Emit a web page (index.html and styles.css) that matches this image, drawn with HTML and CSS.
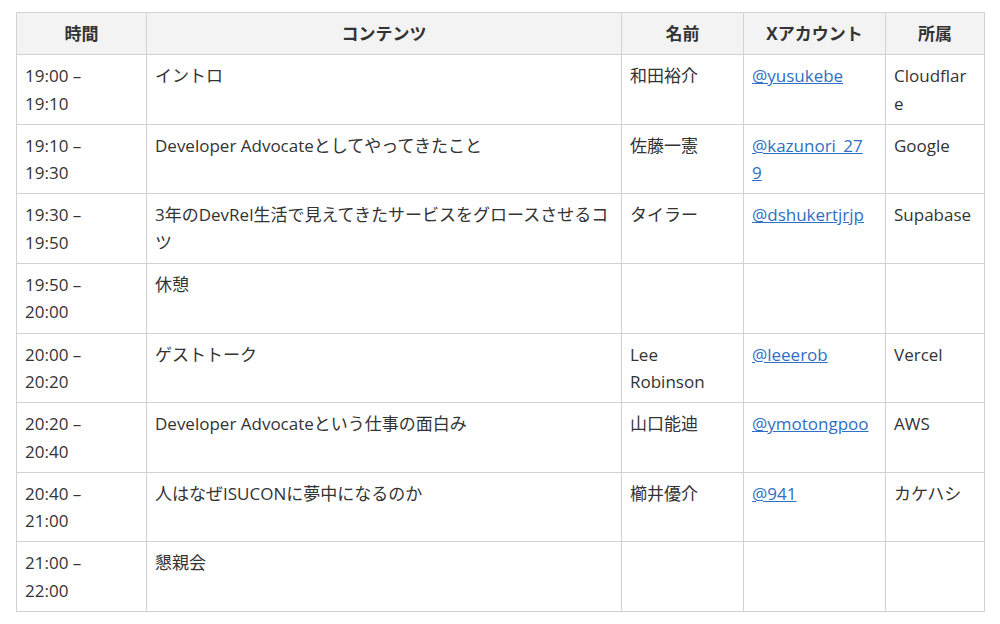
FILE: index.html
```html
<!DOCTYPE html>
<html lang="ja">
<head>
<meta charset="utf-8">
<link rel="stylesheet" href="styles.css">
</head>
<body>
<table class="schedule">
  <colgroup>
    <col class="c-time"><col class="c-content"><col class="c-name"><col class="c-x"><col class="c-org">
  </colgroup>
  <thead>
    <tr><th>時間</th><th>コンテンツ</th><th>名前</th><th>Xアカウント</th><th>所属</th></tr>
  </thead>
  <tbody>
    <tr><td class="time">19:00 – 19:10</td><td>イントロ</td><td>和田裕介</td><td class="x"><a href="#">@yusukebe</a></td><td class="org">Cloudflare</td></tr>
    <tr><td class="time">19:10 – 19:30</td><td>Developer Advocateとしてやってきたこと</td><td>佐藤一憲</td><td class="x"><a href="#">@kazunori_279</a></td><td class="org">Google</td></tr>
    <tr><td class="time">19:30 – 19:50</td><td>3年のDevRel生活で見えてきたサービスをグロースさせるコツ</td><td>タイラー</td><td class="x"><a href="#">@dshukertjrjp</a></td><td class="org">Supabase</td></tr>
    <tr><td class="time">19:50 – 20:00</td><td>休憩</td><td></td><td class="x"></td><td class="org"></td></tr>
    <tr><td class="time">20:00 – 20:20</td><td>ゲストトーク</td><td>Lee Robinson</td><td class="x"><a href="#">@leeerob</a></td><td class="org">Vercel</td></tr>
    <tr><td class="time">20:20 – 20:40</td><td>Developer Advocateという仕事の面白み</td><td>山口能迪</td><td class="x"><a href="#">@ymotongpoo</a></td><td class="org">AWS</td></tr>
    <tr><td class="time">20:40 – 21:00</td><td>人はなぜISUCONに夢中になるのか</td><td>櫛井優介</td><td class="x"><a href="#">@941</a></td><td class="org">カケハシ</td></tr>
    <tr><td class="time">21:00 – 22:00</td><td>懇親会</td><td></td><td class="x"></td><td class="org"></td></tr>
  </tbody>
</table>
</body>
</html>
```
FILE: styles.css
```css
html, body {
  margin: 0;
  padding: 0;
  background: #fff;
}
body {
  padding: 12px 16px;
  font-family: "Open Sans", "Noto Sans CJK JP", sans-serif;
  font-size: 17px;
  line-height: 27.3px;
  color: #333;
}
.schedule {
  width: 968px;
  border-collapse: collapse;
  table-layout: fixed;
}
.c-time { width: 130px; }
.c-content { width: 475px; }
.c-name { width: 122px; }
.c-x { width: 142px; }
.c-org { width: 99px; }
.schedule th,
.schedule td {
  border: 1px solid #d2d2d2;
  padding: 7px 8px;
  vertical-align: top;
  text-align: left;
  overflow-wrap: anywhere;
}
.schedule th {
  background: #f3f3f3;
  font-weight: bold;
  text-align: center;
}
.schedule td {
  height: 54.6px;
}
.schedule td.time {
  padding-right: 40px;
}
.schedule td.x {
  padding-right: 14px;
}
.schedule td.org {
  padding-right: 12px;
}
.schedule a {
  color: #2f6fc4;
  text-decoration: underline;
}
```
